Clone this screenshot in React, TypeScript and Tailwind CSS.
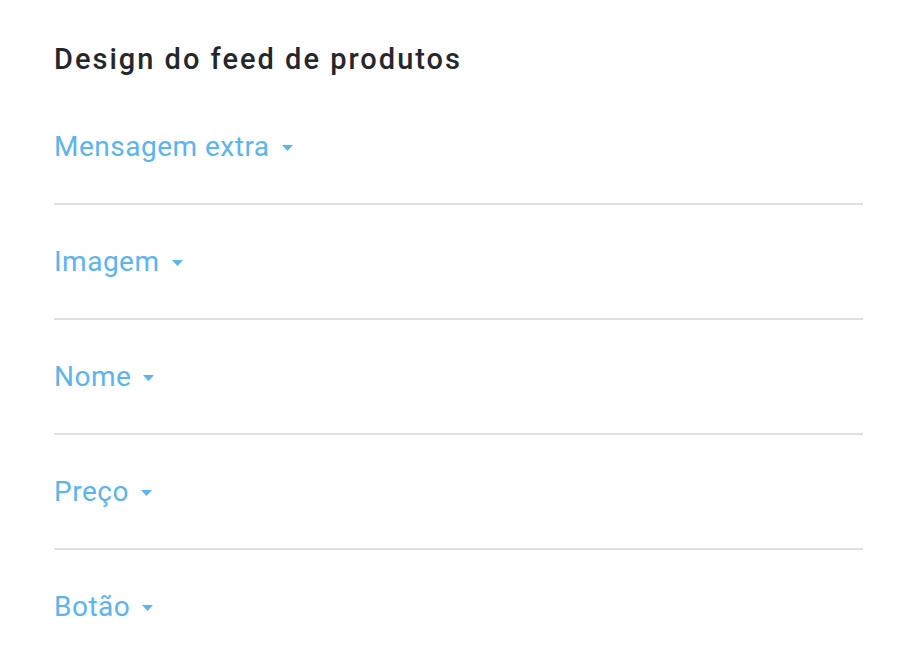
const items = ["Mensagem extra", "Imagem", "Nome", "Preço", "Botão"];

const Caret = () => (
  <svg width="11" height="6" viewBox="0 0 11 6" className="ml-3 mt-[2px]">
    <path d="M0 0h11L5.5 6z" fill="#5ab4ef" />
  </svg>
);

export default function App() {
  return (
    <div className="min-h-screen bg-white font-['Roboto',sans-serif]">
      <div className="w-[863px] pl-[54px]">
        <div className="h-[90px] pt-[41px]">
          <h1 className="text-[29px] font-medium leading-[36px] tracking-[2px] text-[#25272b]">
            Design do feed de produtos
          </h1>
        </div>
        {items.map((label, idx) => (
          <div
            key={idx}
            className={
              idx < items.length - 1
                ? "flex h-[115px] items-center border-b-2 border-[#e0e0e0]"
                : "flex h-[113px] items-center"
            }
          >
            <button className="flex items-center text-[28px] leading-none tracking-[0.5px] text-[#5ab4ef]">
              {label}
              <Caret />
            </button>
          </div>
        ))}
      </div>
    </div>
  );
}
